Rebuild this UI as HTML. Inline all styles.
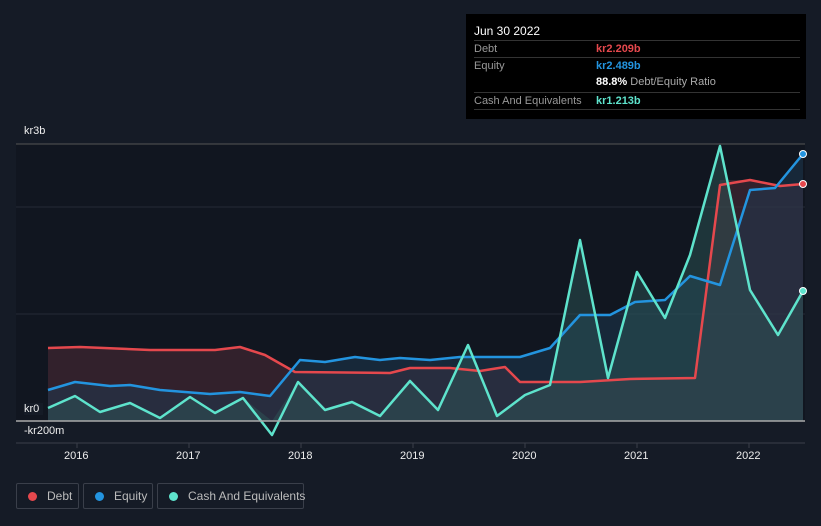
<!DOCTYPE html><html><head><style>
body{margin:0;width:821px;height:526px;background:#151b26;font-family:"Liberation Sans",sans-serif;overflow:hidden;position:relative}
.tt{position:absolute;left:466px;top:14px;width:340px;height:105px;background:#000;color:#fff;font-size:11px}
.row{position:absolute;left:8px;width:326px;border-top:1px solid #333;height:17px;line-height:17px;color:#999}
.row b{position:absolute;left:122px;font-weight:bold}
.lg{position:absolute;top:483px;height:26px;border:1px solid #3a3f4a;border-radius:2px;color:#bbb;font-size:12px;line-height:25px;box-sizing:border-box;white-space:nowrap}
.lg i{display:inline-block;width:9px;height:9px;border-radius:50%;margin:0 10px 0 11px;vertical-align:-1px}
.ax{position:absolute;color:#eee;font-size:11px}
</style></head><body>
<svg width="821" height="526" style="position:absolute;left:0;top:0">
<rect x="16" y="144" width="789" height="277" fill="#111620"/>
<line x1="16" y1="144" x2="805" y2="144" stroke="#555" stroke-width="1"/>
<line x1="16" y1="207" x2="805" y2="207" stroke="#252b36"/>
<line x1="16" y1="314" x2="805" y2="314" stroke="#252b36"/>
<line x1="16" y1="443" x2="805" y2="443" stroke="#3a3f4a"/>
<polygon fill="#4a2a35" opacity="0.6" points="48,348 80,347 150,350 215,350 240,347 265,355 295,372 390,373 410,368 450,368 480,371 505,367 520,382 580,382 630,379 695,378 720,180 750,180 780,186 803,184 803,421 48,421"/>
<polygon fill="#1d3a52" opacity="0.5" points="48,390 75,382 110,386 130,385 160,390 210,394 240,392 270,396 300,360 325,362 355,357 380,360 400,358 430,360 460,357 520,357 550,348 580,315 610,315 635,302 665,300 690,276 720,285 750,190 775,188 803,154 803,421 48,421"/>
<polygon fill="#2e5a5a" opacity="0.45" points="48,408 75,396 100,412 130,403 160,418 190,397 215,413 243,398 272,421 298,382 325,410 352,402 380,416 410,381 438,410 468,345 497,416 525,395 550,385 580,240 608,378 637,272 665,318 690,255 720,146 750,290 778,335 803,291 803,421 48,421"/>
<polyline fill="none" stroke="#e5484d" stroke-width="2.5" stroke-linejoin="round" points="48,348 80,347 150,350 215,350 240,347 265,355 295,372 390,373 410,368 450,368 480,371 505,367 520,382 580,382 630,379 695,378 720,185 750,180 780,186 803,184"/>
<polyline fill="none" stroke="#2394df" stroke-width="2.5" stroke-linejoin="round" points="48,390 75,382 110,386 130,385 160,390 210,394 240,392 270,396 300,360 325,362 355,357 380,360 400,358 430,360 460,357 520,357 550,348 580,315 610,315 635,302 665,300 690,276 720,285 750,190 775,188 803,154"/>
<polyline fill="none" stroke="#5ee3cc" stroke-width="2.5" stroke-linejoin="round" points="48,408 75,396 100,412 130,403 160,418 190,397 215,413 243,398 272,435 298,382 325,410 352,402 380,416 410,381 438,410 468,345 497,416 525,395 550,385 580,240 608,378 637,272 665,318 690,255 720,146 750,290 778,335 803,291"/>
<line x1="16" y1="421" x2="805" y2="421" stroke="#aaa" stroke-width="1.5"/>
<circle cx="803" cy="184" r="3.5" fill="#e5484d" stroke="#fff"/>
<circle cx="803" cy="154" r="3.5" fill="#2394df" stroke="#fff"/>
<circle cx="803" cy="291" r="3.5" fill="#5ee3cc" stroke="#fff"/>
<g stroke="#3a3f4a"><line x1="77" y1="443" x2="77" y2="448"/><line x1="189" y1="443" x2="189" y2="448"/><line x1="301" y1="443" x2="301" y2="448"/><line x1="413" y1="443" x2="413" y2="448"/><line x1="525" y1="443" x2="525" y2="448"/><line x1="637" y1="443" x2="637" y2="448"/><line x1="749" y1="443" x2="749" y2="448"/></g>
</svg>
<div class="ax" style="left:24px;top:125px">kr3b</div>
<div class="ax" style="left:24px;top:403px;background:#151b26;padding-right:4px">kr0</div>
<div class="ax" style="left:24px;top:425px">-kr200m</div>
<div class="ax" style="left:64px;top:450px">2016</div>
<div class="ax" style="left:176px;top:450px">2017</div>
<div class="ax" style="left:288px;top:450px">2018</div>
<div class="ax" style="left:400px;top:450px">2019</div>
<div class="ax" style="left:512px;top:450px">2020</div>
<div class="ax" style="left:624px;top:450px">2021</div>
<div class="ax" style="left:736px;top:450px">2022</div>
<div class="tt">
<div style="position:absolute;left:8px;top:10px;font-size:12px">Jun 30 2022</div>
<div class="row" style="top:26px">Debt<b style="color:#e5484d">kr2.209b</b></div>
<div class="row" style="top:43px">Equity<b style="color:#2394df">kr2.489b</b></div>
<div class="row" style="top:60px;border:none"><b style="color:#fff">88.8%<span style="color:#aaa;font-weight:normal"> Debt/Equity Ratio</span></b></div>
<div class="row" style="top:78px">Cash And Equivalents<b style="color:#5ee3cc">kr1.213b</b></div>
<div class="row" style="top:95px;height:0"></div>
</div>
<div class="lg" style="left:16px;width:63px"><i style="background:#e5484d"></i>Debt</div>
<div class="lg" style="left:83px;width:70px"><i style="background:#2394df"></i>Equity</div>
<div class="lg" style="left:157px;width:147px"><i style="background:#5ee3cc"></i>Cash And Equivalents</div>
</body></html>
